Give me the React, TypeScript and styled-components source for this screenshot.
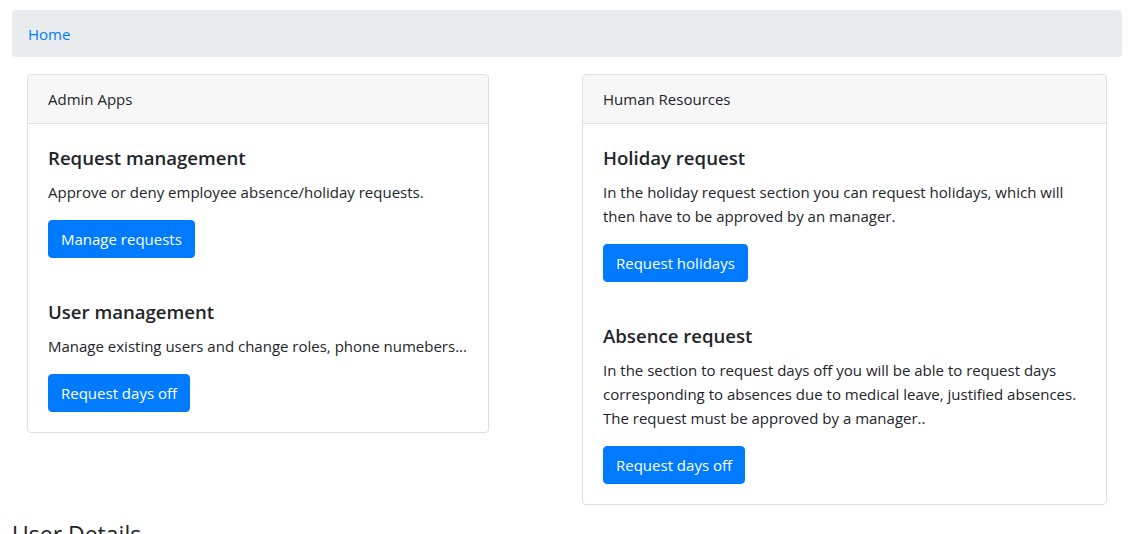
import styled, { createGlobalStyle } from 'styled-components';

const GlobalStyle = createGlobalStyle`
  html, body {
    margin: 0;
    padding: 0;
    background: #fff;
  }
  body {
    font-family: "Open Sans", "Noto Sans", sans-serif;
    font-size: 15px;
    line-height: 24px;
    color: #212529;
  }
  * {
    box-sizing: border-box;
  }
`;

const Page = styled.div`
  padding: 10px 25px 0 12px;
`;

const Breadcrumb = styled.nav`
  display: flex;
  align-items: center;
  height: 47px;
  padding: 0 16px;
  background: #e9ecef;
  border-radius: 4px;
`;

const Crumb = styled.a`
  color: #007bff;
  text-decoration: none;
  cursor: pointer;
`;

const CardRow = styled.div`
  display: flex;
  align-items: flex-start;
  gap: 93px;
  margin-top: 17px;
  padding-left: 15px;
`;

const Card = styled.div<{ $width: number }>`
  width: ${(p) => p.$width}px;
  border: 1px solid #dfdfdf;
  border-radius: 4px;
  background: #fff;
`;

const CardHeader = styled.div`
  padding: 12px 20px;
  background: #f7f7f7;
  border-bottom: 1px solid #dfdfdf;
  border-radius: 3px 3px 0 0;
  font-size: 15px;
`;

const CardBody = styled.div`
  display: flex;
  flex-direction: column;
  gap: 40px;
  padding: 20px;
`;

const Section = styled.div`
  display: flex;
  flex-direction: column;
  align-items: flex-start;
`;

const Title = styled.h5`
  margin: 0 0 10px;
  padding-top: 2px;
  font-size: 18.6px;
  font-weight: 600;
  line-height: 24px;
`;

const Text = styled.p`
  margin: 0 0 16px;
  font-size: 15px;
  line-height: 24px;
`;

const Button = styled.button`
  height: 38px;
  padding: 0 12px;
  border: 1px solid #007bff;
  border-radius: 4px;
  background: #007bff;
  color: #fff;
  font-family: inherit;
  font-size: 15px;
  cursor: pointer;
`;

const Heading = styled.h3`
  margin: 15px 0 0;
  font-size: 23px;
  font-weight: 500;
  line-height: 28px;
`;

type App = {
  title: string;
  text: string;
  action: string;
};

const adminApps: App[] = [
  {
    title: 'Request management',
    text: 'Approve or deny employee absence/holiday requests.',
    action: 'Manage requests',
  },
  {
    title: 'User management',
    text: 'Manage existing users and change roles, phone numebers...',
    action: 'Request days off',
  },
];

const hrApps: App[] = [
  {
    title: 'Holiday request',
    text: 'In the holiday request section you can request holidays, which will then have to be approved by an manager.',
    action: 'Request holidays',
  },
  {
    title: 'Absence request',
    text: 'In the section to request days off you will be able to request days corresponding to absences due to medical leave, justified absences. The request must be approved by a manager..',
    action: 'Request days off',
  },
];

const AppCard = ({ header, apps, width }: { header: string; apps: App[]; width: number }) => (
  <Card $width={width}>
    <CardHeader>{header}</CardHeader>
    <CardBody>
      {apps.map((app) => (
        <Section key={app.title}>
          <Title>{app.title}</Title>
          <Text>{app.text}</Text>
          <Button>{app.action}</Button>
        </Section>
      ))}
    </CardBody>
  </Card>
);

const App = () => {
  return (
    <>
      <GlobalStyle />
      <Page>
        <Breadcrumb>
          <Crumb>Home</Crumb>
        </Breadcrumb>
        <CardRow>
          <AppCard header="Admin Apps" apps={adminApps} width={462} />
          <AppCard header="Human Resources" apps={hrApps} width={525} />
        </CardRow>
        <Heading>User Details</Heading>
      </Page>
    </>
  );
};

export default App;
